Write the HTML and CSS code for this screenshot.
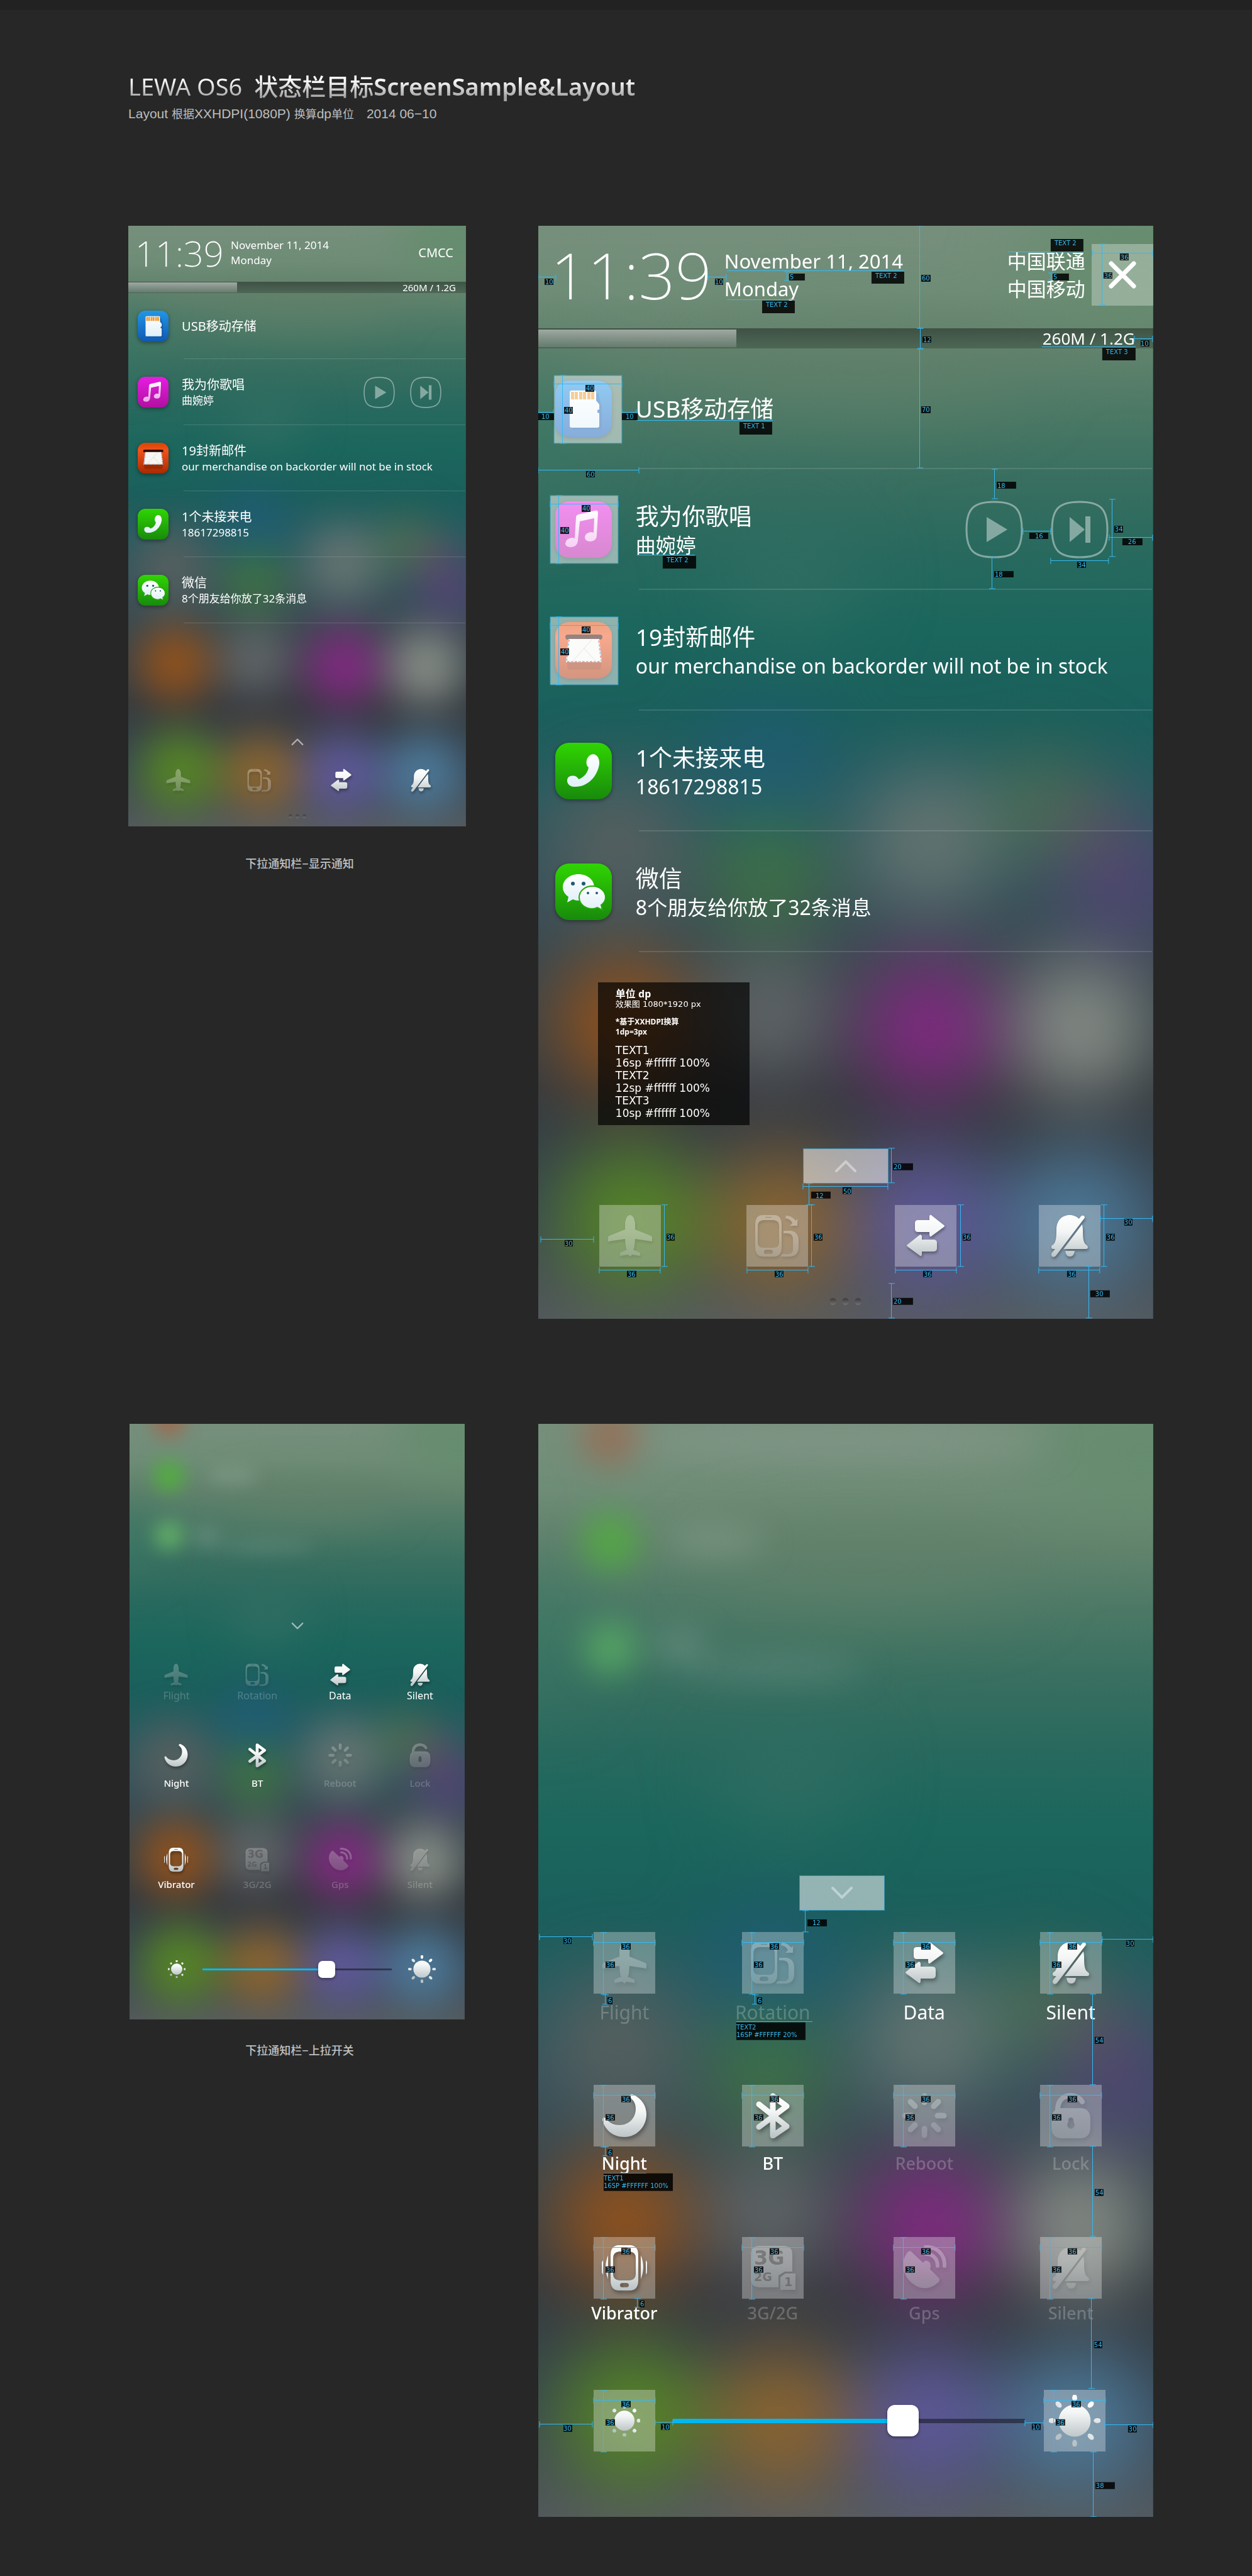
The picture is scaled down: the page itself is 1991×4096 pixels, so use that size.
FILE: index.html
```html
<!DOCTYPE html>
<html lang="zh-CN">
<head>
<meta charset="utf-8">
<meta name="viewport" content="width=device-width, initial-scale=1">
<title>LEWA OS6 状态栏</title>
<link rel="stylesheet" href="styles.css">
</head>
<body>
<svg class="sprite" aria-hidden="true">
  <defs>
    <linearGradient id="base" x1="0" y1="0" x2="0" y2="1">
      <stop offset="0" stop-color="#768f7c"/><stop offset=".06" stop-color="#6f8d77"/>
      <stop offset=".11" stop-color="#62826d"/><stop offset=".17" stop-color="#4c7966"/>
      <stop offset=".23" stop-color="#396f60"/><stop offset=".3" stop-color="#28695e"/>
      <stop offset=".37" stop-color="#1b665d"/><stop offset=".45" stop-color="#1b5f5c"/>
      <stop offset=".52" stop-color="#265b60"/><stop offset=".6" stop-color="#35505a"/>
      <stop offset=".68" stop-color="#3a474e"/><stop offset=".79" stop-color="#343b40"/>
      <stop offset=".9" stop-color="#384652"/><stop offset="1" stop-color="#50565b"/>
    </linearGradient>
    <linearGradient id="metal" gradientUnits="userSpaceOnUse" x1="0" y1="0" x2="0" y2="72">
      <stop offset="0" stop-color="#fff"/><stop offset=".4" stop-color="#f4f6f6"/><stop offset="1" stop-color="#b9c2c4"/>
    </linearGradient>
    <linearGradient id="blue" x1="0" y1="0" x2="0" y2="1"><stop offset="0" stop-color="#2196e6"/><stop offset="1" stop-color="#1059b2"/></linearGradient>
    <linearGradient id="pink" x1="0" y1="0" x2="0" y2="1"><stop offset="0" stop-color="#e61de2"/><stop offset="1" stop-color="#b010a0"/></linearGradient>
    <linearGradient id="red" x1="0" y1="0" x2="0" y2="1"><stop offset="0" stop-color="#d84500"/><stop offset=".25" stop-color="#f0521c"/><stop offset="1" stop-color="#a82a00"/></linearGradient>
    <linearGradient id="green" x1="0" y1="0" x2="0" y2="1"><stop offset="0" stop-color="#30d502"/><stop offset="1" stop-color="#188a0c"/></linearGradient>
    <linearGradient id="paper" x1="0" y1="0" x2="0" y2="1"><stop offset="0" stop-color="#fff"/><stop offset="1" stop-color="#dfeff8"/></linearGradient>
    <linearGradient id="note" x1="0" y1="0" x2="0" y2="1"><stop offset="0" stop-color="#fff"/><stop offset="1" stop-color="#eda0e8"/></linearGradient>
    <filter id="soft" x="-100%" y="-100%" width="300%" height="300%" color-interpolation-filters="sRGB"><feGaussianBlur stdDeviation="60"/></filter>
    <filter id="haze" x="-100%" y="-100%" width="300%" height="300%" color-interpolation-filters="sRGB"><feGaussianBlur stdDeviation="26"/></filter>
    <mask id="bell-cut" maskUnits="userSpaceOnUse" x="-10" y="-10" width="92" height="92">
      <rect x="-10" y="-10" width="92" height="92" fill="#fff"/><path d="M66 1L14 70" stroke="#000" stroke-width="4"/>
    </mask>
    <marker id="tick" markerUnits="userSpaceOnUse" markerWidth="2" markerHeight="10" refX="1" refY="5" orient="auto"><path d="M1 0V10" stroke="#33b9f4" stroke-width="1"/></marker>
  </defs>

  <symbol id="wallpaper" viewBox="0 0 978 1738" preserveAspectRatio="none">
    <rect width="978" height="1738" fill="url(#base)"/>
    <g filter="url(#soft)">
      <ellipse cx="960" cy="40" rx="180" ry="120" fill="#638c6c" opacity=".8"/>
      <ellipse cx="520" cy="230" rx="260" ry="60" fill="#628069" opacity=".6"/>
      <ellipse cx="0" cy="330" rx="90" ry="120" fill="#357865" opacity=".5"/>
      <ellipse cx="400" cy="560" rx="110" ry="90" fill="#336f64" opacity=".7"/>
      <circle cx="125" cy="985" r="110" fill="#57605f"/>
      <circle cx="365" cy="860" r="95" fill="#1f5c74"/>
      <circle cx="620" cy="975" r="110" fill="#657572"/>
      <circle cx="800" cy="920" r="80" fill="#4d7050" opacity=".9"/>
      <circle cx="890" cy="960" r="55" fill="#85565e" opacity=".8"/>
      <circle cx="930" cy="1050" r="88" fill="#504474"/>
      <circle cx="365" cy="1030" r="90" fill="#3f7542"/>
      <ellipse cx="500" cy="1390" rx="500" ry="55" fill="#36383f" opacity=".7"/>
      <circle cx="135" cy="1267" r="106" fill="#95531b"/>
      <circle cx="368" cy="1255" r="95" fill="#64696b"/>
      <circle cx="622" cy="1276" r="106" fill="#832983"/>
      <circle cx="862" cy="1276" r="106" fill="#899089"/>
      <circle cx="148" cy="1578" r="116" fill="#568525"/>
      <circle cx="385" cy="1585" r="112" fill="#8d652f"/>
      <circle cx="618" cy="1585" r="112" fill="#5f589a"/>
      <circle cx="855" cy="1585" r="112" fill="#4d7a9a"/>
      <ellipse cx="490" cy="1800" rx="560" ry="60" fill="#585d60"/>
    </g>
  </symbol>

  <symbol id="i-plane" viewBox="0 0 72 72"><path fill="url(#metal)" d="M36 3C40 3 43 8 44 16V26L69 36Q71 37 71 39V45L44 41L43 52Q43 56 41 58L52 63V68L39 66Q36 71 33 66L20 68V63L31 58Q29 56 29 52L28 41L1 45V39Q1 37 3 36L28 26V16C29 8 32 3 36 3Z"/></symbol>
  <symbol id="i-rotate" viewBox="0 0 72 72"><g fill="url(#metal)"><path fill-rule="evenodd" d="M12 3H32Q43 4 43 18V54Q43 68 32 69H12Q1 68 1 54V18Q1 4 12 3ZM14 11Q5 12 5 20V46Q5 55 14 55H30Q39 55 39 46V20Q39 12 30 11ZM19 58Q15 58 15 61.500T19 65H25Q29 65 29 61.500T25 58ZM17 6V7H27V6Z"/><path d="M46 28H58Q70 30 70 44V54Q70 68 56 69H41L44 65H54Q61 65 61 57V42Q61 32 52 32H46Z"/><path d="M50 4Q60 4 65 12L68 9V20H56L60 16Q57 9 49 8Z"/></g></symbol>
  <symbol id="i-data" viewBox="0 0 72 72"><g fill="url(#metal)"><path d="M24 11H42V5Q43 1 46 4L65 19Q67 20 65 22L46 36Q43 39 42 35V30H24Q19 30 19 25V16Q19 11 24 11Z"/><path d="M48 42H30V37Q29 33 26 35L7 50Q5 51 7 53L26 67Q29 70 30 66V61H48Q54 61 54 56V47Q54 42 48 42Z"/></g></symbol>
  <symbol id="i-silent" viewBox="0 0 72 72"><g fill="url(#metal)"><g mask="url(#bell-cut)"><path d="M36 3C48 3 57 12 57 26C57 40 58 47 62 50Q65 52 65 54Q65 57 62 57H10Q7 57 7 54Q7 51 10 50C14 46 15 40 15 26C15 12 24 3 36 3Z"/><path d="M29 60H44Q43 69 36.500 69T29 60Z"/></g><path d="M54 5Q58 2 60 6Q60 8 58 10L14 68Q11 71 8 69Q6 66 8 63Z"/></g></symbol>
  <symbol id="i-moon" viewBox="0 0 72 72"><path fill="url(#metal)" d="M44 6Q45 0 51 3C63 9 71 20 71 34C71 54 55 70 36 70C18 70 5 59 1 43Q1 37 6 40C12 48 20 51 28 51C43 51 54 40 54 25C54 17 51 12 44 6Z"/></symbol>
  <symbol id="i-bt" viewBox="0 0 72 72"><path fill="none" stroke="url(#metal)" stroke-width="9" stroke-linecap="round" stroke-linejoin="round" d="M14 18L58 53L36 68V5L58 21L14 54"/></symbol>
  <symbol id="i-reboot" viewBox="0 0 72 72"><path fill="none" stroke="url(#metal)" stroke-width="9" stroke-linecap="round" d="M36.100 5V15M36.100 57V67M5 36.100H15M57 36.100H67M14 14L21 21M51 51L58 58M14 58L21 51M51 21L58 14"/></symbol>
  <symbol id="i-lock" viewBox="0 0 72 72"><path fill="none" stroke="url(#metal)" stroke-width="8" stroke-linecap="round" d="M15 30C14 13 22 5 35 4Q48 4 54 14"/><path fill="url(#metal)" fill-rule="evenodd" d="M20 24H52Q67 25 67 42V54Q67 71 52 72H20Q5 71 5 54V42Q5 25 20 24ZM36 39Q31 39 32 46Q29 50 31 54Q36 60 41 54Q43 50 40 46Q41 39 36 39Z"/></symbol>
  <symbol id="i-vibrate" viewBox="0 0 72 72"><g fill="url(#metal)"><path fill-rule="evenodd" d="M26 0H46Q58 1 58 16V56Q58 71 46 72H26Q14 71 14 56V16Q14 1 26 0ZM28 10Q18 11 18 20V46Q18 55 28 56H44Q54 55 54 46V20Q54 11 44 10ZM33 60Q29 60 29 63.500T33 67H39Q43 67 43 63.500T39 60ZM31 4V5H41V4Z"/><path d="M10 16V54Q2 35 10 16ZM62 16V54Q70 35 62 16ZM2 24V47Q-6 35 2 24ZM70 24V47Q78 35 70 24Z"/></g></symbol>
  <symbol id="i-sim" viewBox="0 0 72 72"><path fill="url(#metal)" d="M14 1H54Q67 2 67 14V42H55L45 48V67H14Q1 66 1 54V14Q1 2 14 1Z"/><path fill="url(#metal)" d="M56 45H72V71H48V51Z"/></symbol>
  <symbol id="i-gps" viewBox="0 0 72 72"><path fill="url(#metal)" d="M8 13Q13 6 17 12L34 28Q37 22 43 26Q48 31 45 38L59 52Q62 56 57 60C48 68 38 70 28 67C6 59-6 32 8 13Z"/><path fill="none" stroke="url(#metal)" stroke-width="6" stroke-linecap="round" d="M38 3C56 2 69 15 68 33M39 14C50 14 57 22 57 33"/></symbol>
  <symbol id="i-sun" viewBox="0 0 84 84"><g fill="url(#metal)"><circle cx="42" cy="42" r="26"/><g id="rays"><ellipse cx="42" cy="5" rx="4" ry="6"/><ellipse cx="42" cy="79" rx="4" ry="6"/><ellipse cx="5" cy="42" rx="6" ry="4"/><ellipse cx="79" cy="42" rx="6" ry="4"/></g><use href="#rays" transform="rotate(45 42 42)"/></g></symbol>
  <symbol id="i-dim" viewBox="0 0 84 84"><g fill="url(#metal)"><circle cx="42" cy="42" r="27"/><g id="dots"><circle cx="42" cy="4" r="5"/><circle cx="42" cy="80" r="5"/><circle cx="4" cy="42" r="5"/><circle cx="80" cy="42" r="5"/></g><use href="#dots" transform="rotate(45 42 42)"/></g></symbol>
  <symbol id="i-up" viewBox="0 0 36 20"><path fill="none" stroke="#fff" stroke-width="4" stroke-linecap="round" stroke-linejoin="round" d="M3 18L18 3L33 18"/></symbol>
  <symbol id="i-down" viewBox="0 0 36 20"><path fill="none" stroke="#fff" stroke-width="4" stroke-linecap="round" stroke-linejoin="round" d="M3 2L18 17L33 2"/></symbol>
  <symbol id="i-play" viewBox="0 0 92 92"><path class="ring" d="M46 2C79 2 90 13 90 46S79 90 46 90S2 79 2 46S13 2 46 2Z"/><path fill="#fff" d="M34 26L67 46L34 66Z"/></symbol>
  <symbol id="i-next" viewBox="0 0 92 92"><path class="ring" d="M46 2C79 2 90 13 90 46S79 90 46 90S2 79 2 46S13 2 46 2Z"/><path fill="#fff" d="M30 26L54 46L30 66ZM55 25H63V67H55Z"/></symbol>
  <symbol id="i-close" viewBox="0 0 44 44"><path stroke="#fff" stroke-width="7" stroke-linecap="round" d="M4 4L40 40M40 4L4 40"/></symbol>

  <symbol id="a-usb" viewBox="0 0 90 90"><rect width="90" height="90" rx="22" fill="url(#blue)"/><path fill="#0d4f9a" opacity=".5" d="M27 20H68L74 42V78H27Z"/><path fill="url(#paper)" d="M26 16H62Q65 16 65 19V32L70 38V46L67 47V51L70 52V72Q70 75 67 75H26Q23 75 23 72V19Q23 16 26 16Z"/><path fill="#ee9a2c" d="M25 18h5v12h-5zM31 18h5v12h-5zM38 18h5v12h-5zM44 18h5v12h-5zM51 18h5v12h-5zM57 18h5v12h-5z"/></symbol>
  <symbol id="a-music" viewBox="0 0 90 90"><rect width="90" height="90" rx="22" fill="url(#pink)"/><path fill="url(#note)" d="M37 21L63 15Q68 14 68 18L66 54Q66 63 56 64Q47 64 47 57Q48 50 57 49L61 50L62 27L39 32L36 63Q35 72 26 73Q16 73 16 67Q17 59 27 58L31 59L33 26Q33 22 37 21Z"/></symbol>
  <symbol id="a-mail" viewBox="0 0 90 90"><rect width="90" height="90" rx="22" fill="url(#red)"/><path fill="#7e1d00" opacity=".5" d="M18 60H74L72 76H20Z"/><rect x="16" y="20" width="59" height="8" rx="4" fill="#2a0700"/><path fill="#f6f6f4" d="M21 27H70L74 64H17Z"/><path fill="none" stroke="#e05340" stroke-width="2" stroke-dasharray="4 8" d="M22 28L18 63H73L69 28"/><path fill="none" stroke="#46a9de" stroke-width="2" stroke-dasharray="4 8" stroke-dashoffset="6" d="M22 28L18 63H73L69 28"/><path fill="none" stroke="#c9c9c6" d="M28 62L58 28M46 42L64 62"/></symbol>
  <symbol id="a-phone" viewBox="0 0 90 90"><rect width="90" height="90" rx="22" fill="url(#green)"/><path fill="url(#paper)" d="M57 19C64 16 71 23 70 34C67 54 51 71 30 70C19 70 16 58 22 54C28 51 35 53 37 58C46 55 52 47 53 39C48 36 48 23 57 19Z"/></symbol>
  <symbol id="a-wechat" viewBox="0 0 90 90"><rect width="90" height="90" rx="22" fill="url(#green)"/><path fill="url(#paper)" d="M37 17C51 17 62 26 62 38S51 59 37 59Q32 59 28 57L19 62L21 53Q12 47 12 38C12 26 23 17 37 17Z"/><path fill="url(#paper)" stroke="#25a80a" stroke-width="2" d="M59 36C71 36 80 44 80 54Q80 61 73 66L75 74L67 70Q63 72 59 72C47 72 38 64 38 54S47 36 59 36Z"/><g fill="#1c5a78"><circle cx="28" cy="32" r="3"/><circle cx="45" cy="32" r="3"/><circle cx="52" cy="47" r="2"/><circle cx="66" cy="47" r="2"/></g></symbol>
  <symbol id="size-36" viewBox="0 0 98 98" overflow="visible"><path class="dim" d="M0 16H98"/><path class="dim" d="M16 0V98"/><path class="tag" d="M44 17h15v10h-15zM19 46h15v10h-15z"/></symbol>
  <symbol id="size-40" viewBox="0 0 108 108" overflow="visible"><rect class="area" width="108" height="108"/><path class="dim" d="M0 14H108"/><path class="dim" d="M14 0V108"/><path class="tag" d="M50 15h14v11h-14zM16 50h14v11h-14z"/></symbol>
</svg>

<header class="masthead">
  <h1><span class="thin">LEWA OS6</span> <span class="medium">状态栏目标</span>ScreenSample&amp;Layout</h1>
  <p>Layout <span>根据</span>XXHDPI(1080P) <span>换算</span>dp<span>单位</span> <time datetime="2014-06-10">2014 06−10</time></p>
</header>

<main>
<section class="pair">
  <figure>
    <div class="phone">
      <svg class="wall" aria-hidden="true"><use href="#wallpaper"/></svg>
      <div class="status">
        <time class="clock">11:39</time>
        <p class="date">November 11, 2014<br>Monday</p>
        <p class="carrier carrier--short">CMCC</p>
      </div>
      <div class="memory"><span class="memory-used"></span><span class="memory-text">260M / 1.2G</span></div>
      <ul class="notices">
        <li><svg class="app"><use href="#a-usb"/></svg><div class="body"><h2>USB移动存储</h2></div></li>
        <li><svg class="app"><use href="#a-music"/></svg><div class="body"><h2>我为你歌唱</h2><p>曲婉婷</p></div><div class="media"><button aria-label="播放"><svg><use href="#i-play"/></svg></button><button aria-label="下一首"><svg><use href="#i-next"/></svg></button></div></li>
        <li><svg class="app"><use href="#a-mail"/></svg><div class="body"><h2>19封新邮件</h2><p>our merchandise on backorder will not be in stock</p></div></li>
        <li><svg class="app"><use href="#a-phone"/></svg><div class="body"><h2>1个未接来电</h2><p>18617298815</p></div></li>
        <li><svg class="app"><use href="#a-wechat"/></svg><div class="body"><h2>微信</h2><p>8个朋友给你放了32条消息</p></div></li>
      </ul>
      <button class="handle" aria-label="展开"><svg><use href="#i-up"/></svg></button>
      <div class="quick">
        <button class="off" aria-label="Flight"><svg><use href="#i-plane"/></svg></button>
        <button class="off" aria-label="Rotation"><svg><use href="#i-rotate"/></svg></button>
        <button aria-label="Data"><svg><use href="#i-data"/></svg></button>
        <button aria-label="Silent"><svg><use href="#i-silent"/></svg></button>
      </div>
      <div class="dots"><i></i><i></i><i></i></div>
    </div>
    <figcaption>下拉通知栏−显示通知</figcaption>
  </figure>

  <div class="phone phone--large">
    <svg class="wall" aria-hidden="true"><use href="#wallpaper"/></svg>
    <div class="status">
      <time class="clock">11:39</time>
      <p class="date">November 11, 2014<br>Monday</p>
      <p class="carrier">中国联通<br>中国移动</p>
      <button class="close" aria-label="关闭"><svg><use href="#i-close"/></svg></button>
    </div>
    <div class="memory"><span class="memory-used"></span><span class="memory-text">260M / 1.2G</span></div>
    <ul class="notices">
      <li><svg class="app"><use href="#a-usb"/></svg><div class="body"><h2>USB移动存储</h2></div></li>
      <li><svg class="app"><use href="#a-music"/></svg><div class="body"><h2>我为你歌唱</h2><p>曲婉婷</p></div><div class="media"><button aria-label="播放"><svg><use href="#i-play"/></svg></button><button aria-label="下一首"><svg><use href="#i-next"/></svg></button></div></li>
      <li><svg class="app"><use href="#a-mail"/></svg><div class="body"><h2>19封新邮件</h2><p>our merchandise on backorder will not be in stock</p></div></li>
      <li><svg class="app"><use href="#a-phone"/></svg><div class="body"><h2>1个未接来电</h2><p>18617298815</p></div></li>
      <li><svg class="app"><use href="#a-wechat"/></svg><div class="body"><h2>微信</h2><p>8个朋友给你放了32条消息</p></div></li>
    </ul>
    <div class="spec">
      <h3>单位 dp</h3>
      <p class="spec-size">效果图 1080*1920 px</p>
      <p class="spec-base">*基于XXHDPI换算<br>1dp=3px</p>
      <p class="spec-text">TEXT1<br>16sp #ffffff 100%<br>TEXT2<br>12sp #ffffff 100%<br>TEXT3<br>10sp #ffffff 100%</p>
    </div>
    <button class="handle" aria-label="展开"><svg><use href="#i-up"/></svg></button>
    <div class="quick">
      <button class="off" aria-label="Flight"><svg><use href="#i-plane"/></svg></button>
      <button class="off" aria-label="Rotation"><svg><use href="#i-rotate"/></svg></button>
      <button aria-label="Data"><svg><use href="#i-data"/></svg></button>
      <button aria-label="Silent"><svg><use href="#i-silent"/></svg></button>
    </div>
    <div class="dots"><i></i><i></i><i></i></div>

    <svg class="notes" viewBox="0 0 978 1738">
      <use href="#size-40" x="25" y="238" width="108" height="108"/>
      <use href="#size-40" x="19" y="429" width="108" height="108"/>
      <use href="#size-40" x="19" y="622" width="108" height="108"/>
      <path class="dim" d="M0 82H28"/><path class="dim" d="M270 82H299"/><path class="dim" d="M396 73V87"/>
      <path class="dim" d="M607 0V163"/><path class="dim" d="M608 163V195"/><path class="dim" d="M607 196V385"/>
      <path class="dim" d="M816 75V86"/><path class="dim" d="M881 44H977"/><path class="dim" d="M897 29V125"/><path class="dim" d="M948 180H977"/>
      <path class="dim" d="M0 297H24"/><path class="dim" d="M133 297H156"/><path class="dim" d="M0 389H160"/>
      <path class="dim" d="M726 387V434"/><path class="dim" d="M722 527V577"/><path class="dim" d="M771 486H815"/><path class="dim" d="M913 435V526"/><path class="dim" d="M908 496H977"/><path class="dim" d="M815 533H907"/>
      <path class="dim" d="M562 1467V1522"/><path class="dim" d="M421 1528H556"/><path class="dim" d="M431 1523V1557"/>
      <path class="dim" d="M4 1612H88"/><path class="dim" d="M201 1557V1655"/><path class="dim" d="M97 1661H194"/><path class="dim" d="M435 1557V1655"/><path class="dim" d="M332 1661H429"/>
      <path class="dim" d="M672 1557V1655"/><path class="dim" d="M568 1661H665"/><path class="dim" d="M900 1557V1655"/><path class="dim" d="M796 1661H893"/><path class="dim" d="M894 1579H977"/><path class="dim" d="M876 1655V1737"/><path class="dim" d="M562 1682V1737"/>
      <path class="rule" d="M300 72H582M300 118H408M747 42H867M801 193H950M156 310H373M157 524H249"/>
      <path class="tag" d="M10 84h14v10h-14zM281 84h13v10h-13zM399 76h25v11h-25zM356 119h52v20h-52zM530 73h52v19h-52zM609 78h15v11h-15zM611 176h14v10h-14zM609 287h15v11h-15zM815 21h52v20h-52zM818 76h26v11h-26zM925 44h14v11h-14zM899 74h14v10h-14zM897 194h53v20h-53zM958 182h14v10h-14zM0 298h25v11h-25zM133 298h25v11h-25zM320 312h52v20h-52zM76 390h14v10h-14zM198 525h53v20h-53zM729 407h31v11h-31zM725 549h31v10h-31zM781 488h30v10h-30zM916 477h14v11h-14zM929 497h32v11h-32zM857 534h14v10h-14zM564 1491h32v11h-32zM484 1529h14v11h-14zM434 1536h31v11h-31zM42 1613h13v10h-13zM204 1603h13v11h-13zM141 1662h15v10h-15zM438 1603h14v11h-14zM376 1662h14v10h-14zM675 1603h13v11h-13zM612 1662h14v10h-14zM903 1603h14v11h-14zM841 1662h14v10h-14zM932 1579h13v11h-13zM878 1693h31v11h-31zM564 1705h32v11h-32z"/>
      <text x="76" y="262">40</text><text x="42" y="297">40</text><text x="70" y="453">40</text><text x="36" y="488">40</text><text x="70" y="646">40</text><text x="36" y="681">40</text>
      <text x="11" y="93">10</text><text x="281" y="93">10</text><text x="400" y="85">5</text><text x="362" y="129">TEXT 2</text><text x="536" y="83">TEXT 2</text><text x="610" y="87">60</text><text x="612" y="185">12</text><text x="610" y="296">70</text><text x="821" y="31">TEXT 2</text><text x="819" y="85">5</text><text x="926" y="54">36</text><text x="900" y="83">36</text><text x="903" y="204">TEXT 3</text><text x="958" y="191">10</text><text x="5" y="307">10</text><text x="139" y="307">10</text><text x="326" y="322">TEXT 1</text><text x="77" y="399">60</text><text x="204" y="535">TEXT 2</text><text x="730" y="417">18</text><text x="726" y="558">18</text><text x="790" y="497">16</text><text x="917" y="486">34</text><text x="938" y="506">26</text><text x="858" y="543">34</text><text x="565" y="1500">20</text><text x="485" y="1539">50</text><text x="441" y="1546">12</text><text x="42" y="1622">30</text><text x="204" y="1612">36</text><text x="142" y="1671">36</text><text x="439" y="1612">36</text><text x="377" y="1671">36</text><text x="675" y="1612">36</text><text x="613" y="1671">36</text><text x="904" y="1612">36</text><text x="842" y="1671">36</text><text x="932" y="1588">30</text><text x="886" y="1702">30</text><text x="565" y="1714">20</text>
    </svg>
  </div>
</section>

<section class="pair">
  <figure class="figure--narrow">
    <div class="phone phone--switches">
      <svg class="wall" aria-hidden="true"><use href="#wallpaper"/></svg>
      <svg class="wall" viewBox="0 0 978 1738" preserveAspectRatio="none" aria-hidden="true"><g filter="url(#haze)"><circle cx="115" cy="-8" r="48" fill="#b0563c" opacity=".6"/><circle cx="115" cy="152" r="45" fill="#4fb438" opacity=".85"/><ellipse cx="300" cy="152" rx="75" ry="20" fill="#a0b8a8" opacity=".4"/><circle cx="115" cy="326" r="42" fill="#68ba68" opacity=".8"/><ellipse cx="225" cy="330" rx="40" ry="30" fill="#8aa89c" opacity=".4"/><ellipse cx="400" cy="357" rx="140" ry="14" fill="#8aa89c" opacity=".4"/></g></svg>
      <button class="handle" aria-label="收起"><svg><use href="#i-down"/></svg></button>
      <div class="switches">
        <button class="off first"><svg><use href="#i-plane"/></svg><span>Flight</span></button>
        <button class="off first"><svg><use href="#i-rotate"/></svg><span>Rotation</span></button>
        <button class="first"><svg><use href="#i-data"/></svg><span>Data</span></button>
        <button class="first"><svg><use href="#i-silent"/></svg><span>Silent</span></button>
        <button><svg><use href="#i-moon"/></svg><span>Night</span></button>
        <button><svg><use href="#i-bt"/></svg><span>BT</span></button>
        <button class="off"><svg><use href="#i-reboot"/></svg><span>Reboot</span></button>
        <button class="off"><svg><use href="#i-lock"/></svg><span>Lock</span></button>
        <button class="last"><svg><use href="#i-vibrate"/></svg><span>Vibrator</span></button>
        <button class="off last"><svg viewBox="0 0 72 72"><use href="#i-sim"/><g class="sim-text"><text x="6" y="31">3G</text><text x="6" y="57">2G</text><text x="54" y="65">1</text></g></svg><span>3G/2G</span></button>
        <button class="off last"><svg><use href="#i-gps"/></svg><span>Gps</span></button>
        <button class="off last"><svg><use href="#i-silent"/></svg><span>Silent</span></button>
      </div>
      <div class="brightness">
        <span class="cell"><svg class="sun-low"><use href="#i-dim"/></svg></span>
        <input type="range" min="0" max="100" value="67" aria-label="亮度">
        <span class="cell"><svg class="sun-high"><use href="#i-sun"/></svg></span>
      </div>
    </div>
    <figcaption>下拉通知栏−上拉开关</figcaption>
  </figure>

  <div class="phone phone--large phone--switches">
    <svg class="wall" aria-hidden="true"><use href="#wallpaper"/></svg>
    <svg class="wall" viewBox="0 0 978 1738" preserveAspectRatio="none" aria-hidden="true"><g filter="url(#haze)"><circle cx="115" cy="20" r="48" fill="#b0563c" opacity=".5"/><ellipse cx="480" cy="30" rx="340" ry="30" fill="#8a9c90" opacity=".5"/><circle cx="115" cy="188" r="45" fill="#4fb438" opacity=".75"/><ellipse cx="280" cy="188" rx="80" ry="18" fill="#a0b8a8" opacity=".4"/><circle cx="115" cy="358" r="42" fill="#5cb664" opacity=".75"/><ellipse cx="225" cy="355" rx="40" ry="30" fill="#8aa89c" opacity=".4"/><ellipse cx="380" cy="390" rx="140" ry="16" fill="#8aa89c" opacity=".4"/></g></svg>
    <button class="handle" aria-label="收起"><svg><use href="#i-down"/></svg></button>
    <div class="switches">
      <button class="off first"><svg><use href="#i-plane"/></svg><span>Flight</span></button>
      <button class="off first"><svg><use href="#i-rotate"/></svg><span>Rotation</span></button>
      <button class="first"><svg><use href="#i-data"/></svg><span>Data</span></button>
      <button class="first"><svg><use href="#i-silent"/></svg><span>Silent</span></button>
      <button><svg><use href="#i-moon"/></svg><span>Night</span></button>
      <button><svg><use href="#i-bt"/></svg><span>BT</span></button>
      <button class="off"><svg><use href="#i-reboot"/></svg><span>Reboot</span></button>
      <button class="off"><svg><use href="#i-lock"/></svg><span>Lock</span></button>
      <button class="last"><svg><use href="#i-vibrate"/></svg><span>Vibrator</span></button>
      <button class="off last"><svg viewBox="0 0 72 72"><use href="#i-sim"/><g class="sim-text"><text x="6" y="31">3G</text><text x="6" y="57">2G</text><text x="54" y="65">1</text></g></svg><span>3G/2G</span></button>
      <button class="off last"><svg><use href="#i-gps"/></svg><span>Gps</span></button>
      <button class="off last"><svg><use href="#i-silent"/></svg><span>Silent</span></button>
    </div>
    <div class="brightness">
      <span class="cell"><svg class="sun-low"><use href="#i-dim"/></svg></span>
      <input type="range" min="0" max="100" value="67" aria-label="亮度">
      <span class="cell"><svg class="sun-high"><use href="#i-sun"/></svg></span>
    </div>

    <svg class="notes" viewBox="0 0 978 1738">
      <use href="#size-36" x="88" y="809" width="98" height="98"/><use href="#size-36" x="324" y="809" width="98" height="98"/><use href="#size-36" x="565" y="809" width="98" height="98"/><use href="#size-36" x="798" y="809" width="98" height="98"/>
      <use href="#size-36" x="88" y="1052" width="98" height="98"/><use href="#size-36" x="324" y="1052" width="98" height="98"/><use href="#size-36" x="565" y="1052" width="98" height="98"/><use href="#size-36" x="798" y="1052" width="98" height="98"/>
      <use href="#size-36" x="88" y="1294" width="98" height="98"/><use href="#size-36" x="324" y="1294" width="98" height="98"/><use href="#size-36" x="565" y="1294" width="98" height="98"/><use href="#size-36" x="798" y="1294" width="98" height="98"/>
      <use href="#size-36" x="88" y="1537" width="98" height="98"/><use href="#size-36" x="804" y="1537" width="98" height="98"/>
      <path class="dim" d="M425 774V808"/><path class="dim" d="M2 816H86"/><path class="dim" d="M107 908V923"/><path class="dim" d="M345 908V923"/><path class="dim" d="M107 1150V1164"/><path class="dim" d="M897 820H978"/>
      <path class="dim" d="M882 907V1051"/><path class="dim" d="M882 1149V1292"/><path class="dim" d="M880 1391V1534"/><path class="dim" d="M883 1635V1738"/><path class="dim" d="M158 1391V1405"/>
      <path class="dim" d="M2 1591H86"/><path class="dim" d="M186 1588H214"/><path class="dim" d="M774 1589H804"/><path class="dim" d="M901 1592H978"/>
      <path class="rule" d="M315 951H436M104 1192H172"/>
      <path class="tag" d="M428 788h31v11h-31zM40 817h13v10h-13zM110 912h8v11h-8zM348 912h8v11h-8zM315 952h110v28h-110zM110 1154h8v10h-8zM104 1192h110v28h-110zM935 821h13v10h-13zM885 975h14v11h-14zM885 1217h14v11h-14zM884 1459h13v11h-13zM886 1683h31v11h-31zM161 1394h8v11h-8zM40 1592h14v11h-14zM195 1590h14v10h-14zM785 1590h14v10h-14zM938 1593h14v11h-14z"/>
      <text x="133" y="835">36</text><text x="108" y="864">36</text><text x="369" y="835">36</text><text x="344" y="864">36</text><text x="610" y="835">36</text><text x="585" y="864">36</text><text x="843" y="835">36</text><text x="818" y="864">36</text>
      <text x="133" y="1078">36</text><text x="108" y="1107">36</text><text x="369" y="1078">36</text><text x="344" y="1107">36</text><text x="610" y="1078">36</text><text x="585" y="1107">36</text><text x="843" y="1078">36</text><text x="818" y="1107">36</text>
      <text x="133" y="1320">36</text><text x="108" y="1349">36</text><text x="369" y="1320">36</text><text x="344" y="1349">36</text><text x="610" y="1320">36</text><text x="585" y="1349">36</text><text x="843" y="1320">36</text><text x="818" y="1349">36</text>
      <text x="133" y="1563">36</text><text x="108" y="1592">36</text><text x="849" y="1563">36</text><text x="824" y="1592">36</text>
      <text x="436" y="797">12</text><text x="40" y="826">30</text><text x="111" y="921">6</text><text x="349" y="921">6</text><text x="315" y="963">TEXT2</text><text x="315" y="975">16SP #FFFFFF 20%</text><text x="111" y="1163">6</text><text x="104" y="1203">TEXT1</text><text x="104" y="1215">16SP #FFFFFF 100%</text><text x="935" y="830">30</text><text x="886" y="984">54</text><text x="886" y="1226">54</text><text x="884" y="1468">54</text><text x="887" y="1692">38</text><text x="162" y="1403">6</text><text x="40" y="1601">30</text><text x="196" y="1599">10</text><text x="785" y="1599">10</text><text x="939" y="1602">30</text>
    </svg>
  </div>
</section>
</main>
</body>
</html>
```
FILE: styles.css
```css
* { box-sizing: border-box; }

body {
  margin: 0;
  background: #272727;
  border-top: 16px solid #222;
  color: #fff;
  font-family: "Noto Sans", "Noto Sans CJK SC", sans-serif;
}

h1, h2, h3, p, ul, figure { margin: 0; padding: 0; font-weight: 400; }
ul { list-style: none; }
button {
  padding: 0;
  border: 0;
  background: none;
  color: inherit;
  font: inherit;
  cursor: pointer;
}
svg { display: block; overflow: visible; }
.sprite { position: absolute; width: 0; height: 0; }

/* Title */
.masthead { height: 343px; padding: 96px 0 0 10.250%; }
.masthead h1 {
  width: max-content;
  font-size: 38px;
  line-height: 50px;
  font-weight: 600;
  background: linear-gradient(#fff 30%, #a4a4a4 85%);
  background-clip: text;
  -webkit-background-clip: text;
  color: transparent;
}
.masthead .thin { font-weight: 400; margin-right: 9px; }
.masthead .medium { font-weight: 500; }
.masthead p {
  margin-top: 5px;
  color: #bdbdbd;
  font: 21px/28px "Liberation Sans", "Noto Sans CJK SC", sans-serif;
}
.masthead p span { font-size: 18px; }
.masthead time { margin-left: 14px; }

/* Each row: a plain screen and its enlarged, measured twin */
.pair {
  display: grid;
  grid-template-columns: 537fr 978fr;
  column-gap: 7.050%;
  align-items: start;
  padding: 0 7.900% 0 10.250%;
  margin-bottom: 167px;
}
.pair:last-child { margin-bottom: 0; padding-bottom: 92px; }
.figure--narrow { padding: 0 2px; }
figcaption {
  margin-top: 45px;
  padding-left: 8px;
  color: #c0c0c0;
  text-align: center;
  font-size: 18px;
  line-height: 28px;
  font-weight: 500;
}
.figure--narrow figcaption { margin-top: 35px; }

/* Screen, with the small sizes as defaults */
.phone {
  --status: 89px;
  --bar: 18px;
  --row: 105px;
  --app: 49px;
  --icon: 39px;
  --cell: 44px;
  --title: 20px;
  --title-line: 27px;
  --sub: 17px;
  --sub-line: 24px;
  --bar-text: 15px;
  position: relative;
  isolation: isolate;
  overflow: hidden;
  display: flex;
  flex-direction: column;
}
.phone--large {
  --status: 163px;
  --bar: 32px;
  --row: 192px;
  --app: 90px;
  --icon: 72px;
  --cell: 98px;
  --title: 37px;
  --title-line: 50px;
  --sub: 32px;
  --sub-line: 42px;
  --bar-text: 26px;
}
.wall {
  position: absolute;
  inset: 0;
  z-index: -1;
  width: 100%;
  height: 100%;
}

/* Status area */
.status {
  display: flex;
  align-items: center;
  height: var(--status);
  padding: 0 0 4px 11px;
}
.clock {
  width: 152px;
  font-size: 56px;
  line-height: 60px;
  font-weight: 200;
}
.date { font-size: var(--sub); line-height: var(--sub-line); }
.carrier { margin-left: auto; font-size: var(--sub); line-height: var(--sub-line); }
.carrier--short { padding-right: 20px; font-size: 20px; }
.phone--large .status { padding: 0 0 8px 20px; }
.phone--large .clock { width: 276px; font-size: 102px; line-height: 110px; }
.phone--large .date, .phone--large .status .carrier { font-size: 31px; line-height: 44px; }
.close {
  display: grid;
  place-items: center;
  width: 98px;
  height: 98px;
  margin-left: 10px;
  background: rgba(255, 255, 255, .3);
}
.close svg { width: 44px; height: 44px; }

.memory {
  display: flex;
  align-items: center;
  justify-content: space-between;
  height: var(--bar);
  background: linear-gradient(rgba(0, 0, 0, .38), rgba(0, 0, 0, .2));
  font-size: var(--bar-text);
  line-height: var(--bar);
}
.memory-text { margin-right: 16px; }
.phone--large .memory-text { margin-right: 29px; }
.memory-used {
  width: 32.200%;
  height: 90%;
  background: linear-gradient(rgba(255, 255, 255, .5), rgba(255, 255, 255, .15));
}

/* Notifications */
.notices li {
  position: relative;
  display: flex;
  align-items: center;
  height: var(--row);
  padding-left: 15px;
}
.notices li::after {
  content: "";
  position: absolute;
  left: 88px;
  right: 1px;
  bottom: 0;
  height: 1px;
  background: rgba(255, 255, 255, .15);
}
.phone--large .notices li { padding-left: 27px; }
.phone--large .notices li::after { left: 160px; right: 2px; height: 2px; background: rgba(255, 255, 255, .12); }
.app {
  flex: none;
  width: var(--app);
  height: var(--app);
  filter: drop-shadow(0 2px 3px rgba(0, 0, 0, .4));
}
.body { flex: 1; padding-left: 21px; white-space: nowrap; }
.phone--large .body { padding-left: 38px; }
.body h2 { font-size: var(--title); line-height: var(--title-line); }
.body p { font-size: var(--sub); line-height: var(--sub-line); }
.media { display: flex; gap: 24px; padding-right: 39px; }
.media svg { width: 50px; height: 50px; opacity: .42; }
.phone--large .media { gap: 44px; padding-right: 71px; }
.phone--large .media svg { width: 92px; height: 92px; }
.ring { fill: none; stroke: #fff; stroke-width: 3; }

/* Unit card */
.spec {
  width: 241px;
  margin: 48px 0 0 95px;
  padding: 9px 0 9px 28px;
  background: rgba(0, 0, 0, .68);
  white-space: nowrap;
  font-family: "DejaVu Sans", "Noto Sans CJK SC", sans-serif;
}
.spec h3 { font: 700 16px/18px "Noto Sans", "Noto Sans CJK SC", sans-serif; }
.spec-size { font-size: 13px; line-height: 16px; }
.spec-base { margin: 12px 0 11px; font: 700 12px/16px "Noto Sans", "Noto Sans CJK SC", sans-serif; }
.spec-text { font-size: 17px; line-height: 20px; }

/* Pull handle */
.handle {
  align-self: center;
  display: grid;
  place-items: center;
  width: 74px;
  height: 30px;
  margin-top: 173px;
}
.handle svg { width: 20px; height: 11px; opacity: .55; }
.phone--large .handle {
  width: 136px;
  height: 56px;
  margin-top: 37px;
  border: 1px solid #3a90b0;
  background: rgba(255, 255, 255, .53);
}
.phone--large .handle svg { width: 36px; height: 20px; opacity: .4; }
.phone--switches .handle { margin-top: 306px; }
.phone--large.phone--switches .handle { margin: 718px 12px 0 0; }

/* Quick toggles */
.quick {
  display: grid;
  grid-template-columns: 234fr 234fr 238fr 220fr;
  justify-items: center;
  margin-top: 24px;
  padding: 0 11px 0 15px;
}
.phone--large .quick { margin-top: 34px; padding: 0 23px 0 29px; }
.quick button {
  display: grid;
  place-items: center;
  width: var(--cell);
  height: var(--cell);
}
.phone--large .quick button { background: rgba(255, 255, 255, .3); }
.quick svg {
  width: var(--icon);
  height: var(--icon);
  filter: drop-shadow(1px 3px 2px rgba(0, 0, 0, .35));
}
.quick .off svg { opacity: .3; }

.dots { display: flex; justify-content: center; gap: 5px; margin-top: 33px; padding-bottom: 13px; }
.dots i {
  width: 6px;
  height: 6px;
  border-radius: 50%;
  background: linear-gradient(rgba(0, 0, 0, .35), rgba(255, 255, 255, .15));
}
.phone--large .dots { gap: 9px; margin-top: 50px; padding-bottom: 22px; }
.phone--large .dots i { width: 11px; height: 11px; }

/* Switch board */
.switches {
  display: grid;
  grid-template-columns: 236fr 236fr 246fr 220fr;
  grid-template-rows: 128px 166px 174px;
  align-items: start;
  margin-top: 41px;
  padding: 0 11px 0 10px;
}
.switches button {
  display: flex;
  flex-direction: column;
  align-items: center;
  font-size: 15px;
  line-height: 44px;
  font-weight: 500;
}
.switches .first { font-size: 16px; line-height: 23px; font-weight: 400; }
.switches .last { line-height: 34px; }
.switches svg {
  width: var(--cell);
  height: var(--cell);
  padding: 3px;
  filter: drop-shadow(1px 3px 2px rgba(0, 0, 0, .35));
}
.switches .off svg use { opacity: .25; }
.switches .off span { opacity: .22; }
.sim-text { fill: #3c3c3c; opacity: .4; }
.sim-text text { font: 700 32px "DejaVu Sans", sans-serif; }
.sim-text text + text { font-size: 19px; }

.phone--large .switches { grid-template-rows: 243px 242px 243px; margin-top: 34px; padding: 0 21px 0 19px; }
.phone--large .switches button { font-size: 27px; line-height: 54px; }
.phone--large .switches .first { font-size: 30px; line-height: 60px; }
.phone--large .switches .last { line-height: 46px; }
.phone--large .switches svg {
  padding: 13px;
  background: rgba(255, 255, 255, .3);
  filter: none;
}
.phone--large .switches svg use { filter: drop-shadow(2px 4px 3px rgba(0, 0, 0, .35)); }

/* Brightness */
.brightness { display: flex; align-items: center; padding: 0 46px 58px 53px; }
.phone--large .brightness { padding: 0 76px 104px 88px; }
.cell { flex: none; display: grid; place-items: center; width: var(--cell); height: var(--cell); }
.phone--large .cell { background: rgba(255, 255, 255, .3); }
.sun-low { width: 28px; height: 28px; }
.sun-high { width: 44px; height: 44px; }
.phone--large .sun-low { width: 50px; height: 50px; }
.phone--large .sun-high { width: 82px; height: 82px; }
.brightness input {
  flex: 1;
  min-width: 0;
  height: 27px;
  margin: 0 26px 0 19px;
  appearance: none;
  background: linear-gradient(90deg, #00b7f0 67%, rgba(32, 32, 48, .65) 67%) center / 100% 3px no-repeat;
}
.brightness input::-webkit-slider-thumb {
  appearance: none;
  width: 27px;
  height: 27px;
  border-radius: 7px;
  background: #fff;
  box-shadow: 0 2px 4px rgba(0, 0, 0, .4);
}
.phone--large .brightness input { height: 50px; margin: 0 30px 0 28px; background-size: 100% 7px; }
.phone--large .brightness input::-webkit-slider-thumb { width: 50px; height: 50px; border-radius: 12px; }

/* Measurement overlay */
.notes {
  position: absolute;
  top: 0;
  left: 0;
  width: 100%;
  pointer-events: none;
  overflow: hidden;
}
.notes text { font-family: "DejaVu Sans", sans-serif; font-size: 10px; fill: #33b9f4; }
.dim { fill: none; stroke: #33b9f4; stroke-width: 1; shape-rendering: crispEdges; marker-start: url(#tick); marker-end: url(#tick); }
.rule { fill: none; stroke: #33b9f4; stroke-width: 1; shape-rendering: crispEdges; }
.tag { fill: rgba(0, 0, 0, .85); }
.area { fill: rgba(255, 255, 255, .5); stroke: #2e9dbd; }
```
